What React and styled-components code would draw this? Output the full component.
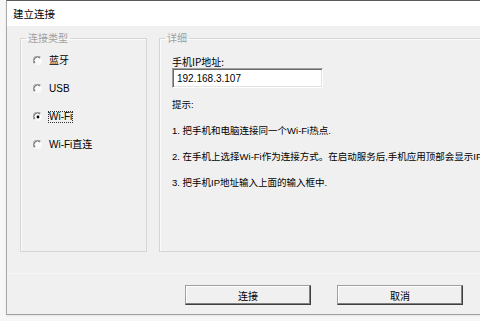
import styled, { createGlobalStyle } from "styled-components";

const GlobalStyle = createGlobalStyle`
  html, body {
    margin: 0;
    padding: 0;
    background: #f7f7f7;
    overflow: hidden;
  }
  body {
    font-family: "Liberation Sans", "Noto Sans CJK SC", sans-serif;
    font-size: 10px;
    color: #000;
  }
`;

const Page = styled.div`
  width: 480px;
  height: 321px;
  overflow: hidden;
  padding-left: 6px;
  box-sizing: border-box;
`;

const Window = styled.div`
  width: 520px;
  height: 315px;
  box-sizing: border-box;
  border-top: 1px solid #5a5a5a;
  border-left: 1px solid #a8a8a8;
  border-bottom: 1px solid #a0a0a0;
  background: #f0f0f0;
  display: flex;
  flex-direction: column;
  box-shadow: 0 1px 2px rgba(0, 0, 0, 0.08);
`;

const TitleBar = styled.div`
  height: 25px;
  background: #fff;
  display: flex;
  align-items: center;
  padding-left: 6px;
  font-size: 10.5px;
  font-family: "Noto Sans CJK SC", sans-serif;
`;

const Body = styled.div`
  display: flex;
  gap: 12px;
  padding: 6px 0 0 13px;
`;

const Group = styled.fieldset`
  margin: 0;
  padding: 0;
  height: 220px;
  width: ${(p) => p.$width}px;
  box-sizing: border-box;
  border: 1px solid #d5d5d5;
  box-shadow: inset 1px 1px #fbfbfb;
  min-width: 0;
`;

const Legend = styled.legend`
  margin-left: 5px;
  padding: 0 2px;
  line-height: 12px;
  color: #a0a0a0;
  font-family: "Noto Sans CJK SC", sans-serif;
  font-size: 10px;
`;

const RadioList = styled.div`
  display: flex;
  flex-direction: column;
  gap: 16px;
  padding: 11px 0 0 12px;
`;

const RadioRow = styled.div`
  display: flex;
  align-items: center;
  height: 12px;
  gap: 5px;
`;

const RadioLabel = styled.span`
  line-height: 12px;
  padding: 0 1px;
  outline: ${(p) => (p.$focus ? "1px dotted #333" : "none")};
  outline-offset: -1px;
`;

const Details = styled.div`
  display: flex;
  flex-direction: column;
  padding: 12px 0 0 12px;
`;

const Label = styled.div`
  line-height: 12px;
  font-family: "Noto Sans CJK SC", sans-serif;
`;

const Input = styled.div`
  width: 151px;
  height: 20px;
  box-sizing: border-box;
  background: #fff;
  border: 1px solid;
  border-color: #a0a0a0 #ffffff #ffffff #a0a0a0;
  box-shadow: inset 1px 1px #696969, inset -1px -1px #e3e3e3;
  display: flex;
  align-items: center;
  padding-left: 4px;
  font-size: 10px;
`;

const Tips = styled.div`
  margin-top: 11px;
  display: flex;
  flex-direction: column;
  gap: 14px;
  white-space: nowrap;
  font-size: 9.5px;
`;

const TipLine = styled.div`
  line-height: 12px;
`;

const Footer = styled.div`
  flex: 1;
  display: flex;
  align-items: center;
  gap: 26px;
  padding-left: 178px;
  padding-top: 2px;
  margin-top: 21px;
  border-top: 1px solid #f6f6f6;
`;

const Button = styled.div`
  width: 126px;
  height: 20px;
  box-sizing: border-box;
  display: flex;
  align-items: center;
  justify-content: center;
  background: #f0f0f0;
  border: 1px solid;
  border-color: #a0a0a0 #404040 #404040 #a0a0a0;
  box-shadow: inset -1px -1px #808080, inset 1px 1px #fff;
  font-family: "Noto Sans CJK SC", sans-serif;
`;

const RadioIcon = ({ checked }) => (
  <svg width="10" height="10" viewBox="0 0 10 10">
    <circle cx="5" cy="5" r="4" fill="#fafafa" />
    <path d="M1.2 7.6 A4.3 4.3 0 0 1 7.6 1.2" fill="none" stroke="#9a9a9a" strokeWidth="1" />
    <path d="M2 7 A3.4 3.4 0 0 1 7 2" fill="none" stroke="#505050" strokeWidth="0.9" />
    {checked && <circle cx="5" cy="5" r="1.4" fill="#000" />}
  </svg>
);

const options = [
  { label: "蓝牙" },
  { label: "USB" },
  { label: "Wi-Fi", checked: true },
  { label: "Wi-Fi直连" },
];

export default function App() {
  return (
    <Page>
      <GlobalStyle />
      <Window>
        <TitleBar>建立连接</TitleBar>
        <Body>
          <Group $width={127}>
            <Legend>连接类型</Legend>
            <RadioList>
              {options.map((o) => (
                <RadioRow key={o.label}>
                  <RadioIcon checked={o.checked} />
                  <RadioLabel $focus={o.checked}>{o.label}</RadioLabel>
                </RadioRow>
              ))}
            </RadioList>
          </Group>
          <Group $width={340}>
            <Legend>详细</Legend>
            <Details>
              <Label>手机IP地址:</Label>
              <Input>192.168.3.107</Input>
              <Tips>
                <TipLine>提示:</TipLine>
                <TipLine>1. 把手机和电脑连接同一个Wi-Fi热点.</TipLine>
                <TipLine>2. 在手机上选择Wi-Fi作为连接方式。在启动服务后,手机应用顶部会显示IP地址.</TipLine>
                <TipLine>3. 把手机IP地址输入上面的输入框中.</TipLine>
              </Tips>
            </Details>
          </Group>
        </Body>
        <Footer>
          <Button>连接</Button>
          <Button>取消</Button>
        </Footer>
      </Window>
    </Page>
  );
}
